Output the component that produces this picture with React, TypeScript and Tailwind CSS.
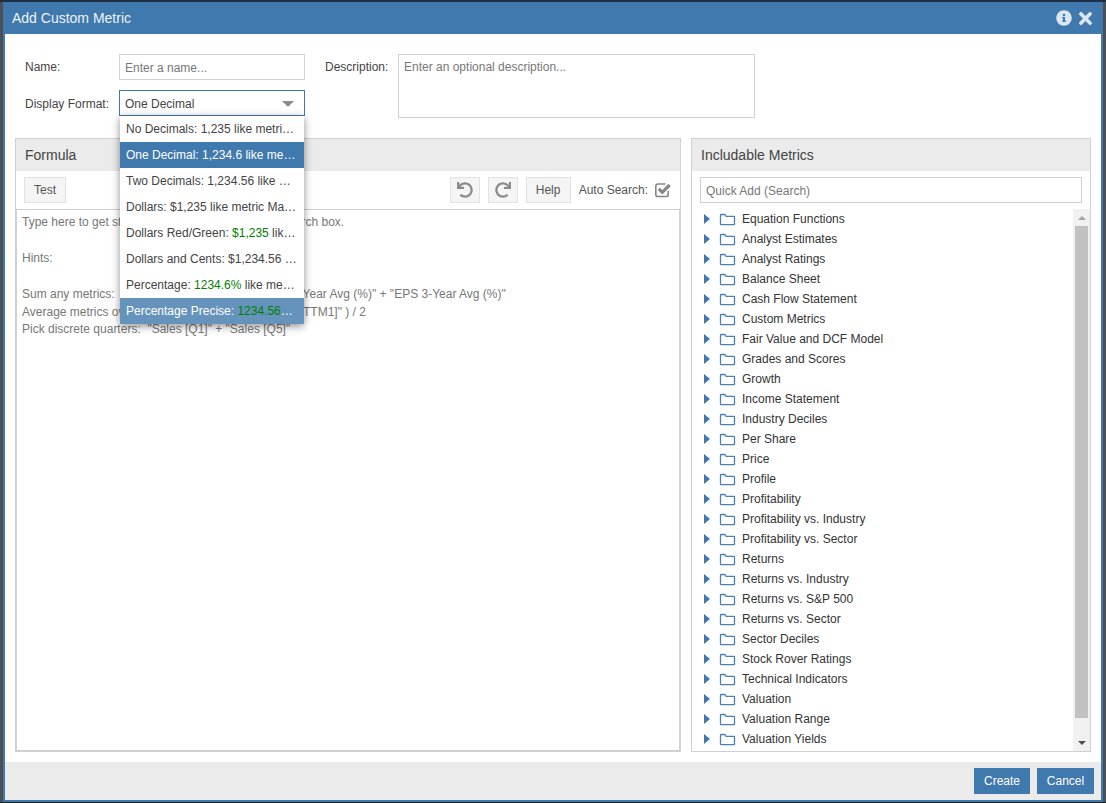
import React from "react";
import { FaInfoCircle, FaTimes, FaUndo, FaRedo } from "react-icons/fa";

const metrics = ["Equation Functions","Analyst Estimates","Analyst Ratings","Balance Sheet","Cash Flow Statement","Custom Metrics","Fair Value and DCF Model","Grades and Scores","Growth","Income Statement","Industry Deciles","Per Share","Price","Profile","Profitability","Profitability vs. Industry","Profitability vs. Sector","Returns","Returns vs. Industry","Returns vs. S&P 500","Returns vs. Sector","Sector Deciles","Stock Rover Ratings","Technical Indicators","Valuation","Valuation Range","Valuation Yields"];

const Green = ({ children }: { children: React.ReactNode }) => <span className="text-[#008000]">{children}</span>;

const options: { key: string; node: React.ReactNode; cls: string }[] = [
  { key: "a", node: <>No Decimals: 1,235 like metric Market Cap</>, cls: "text-[#444]" },
  { key: "b", node: <>One Decimal: 1,234.6 like metric P/E Ratio</>, cls: "bg-[#3f79ad] text-white" },
  { key: "c", node: <>Two Decimals: 1,234.56 like metric Price</>, cls: "text-[#444]" },
  { key: "d", node: <>Dollars: $1,235 like metric Market Cap</>, cls: "text-[#444]" },
  { key: "e", node: <>Dollars Red/Green: <Green>$1,235</Green> like metric Net Income</>, cls: "text-[#444]" },
  { key: "f", node: <>Dollars and Cents: $1,234.56 like metric Price</>, cls: "text-[#444]" },
  { key: "g", node: <>Percentage: <Green>1234.6%</Green> like metric Growth</>, cls: "text-[#444]" },
  { key: "h", node: <>Percentage Precise: <Green>1234.56%</Green> like metric Yield</>, cls: "bg-[#6693bb] text-white" },
];

function Folder() {
  return (
    <svg width="17" height="13" viewBox="0 0 17 13" fill="none" className="shrink-0">
      <path d="M1.5 11V2.2c0-.4.3-.7.7-.7h3.6l1.4 1.8h7.6c.4 0 .7.3.7.7V11c0 .4-.3.7-.7.7H2.2c-.4 0-.7-.3-.7-.7Z" stroke="#4a80b2" strokeWidth="1.3" />
    </svg>
  );
}

function CheckBox() {
  return (
    <svg width="16" height="16" viewBox="0 0 16 16" fill="none" className="ml-[7px]">
      <path d="M13.200 9v3.400c0 1.200-.9 2.100-2.100 2.100H2.900c-1.200 0-2.100-.9-2.100-2.100V4.100C.8 2.900 1.700 2 2.900 2h7.600" stroke="#858585" strokeWidth="1.600" />
      <path d="M3.800 6.800 7.300 10.300 14.600 3" stroke="#858585" strokeWidth="3.200" />
    </svg>
  );
}

function ToolButton({ children, className }: { children: React.ReactNode; className: string }) {
  return (
    <div className={"flex h-[26px] items-center justify-center border border-[#e2e2e2] bg-[#f5f5f5] " + className}>{children}</div>
  );
}

export default function App() {
  return (
    <div className="flex h-[803px] w-[1106px] flex-col overflow-hidden bg-[#4b5056] text-[12px] [font-family:'Liberation_Sans',Arial,sans-serif]">
      <div className="h-[2px] shrink-0 bg-[#1f3044]" />
      <div className="ml-[3px] flex h-[800px] w-[1100px] shrink-0 flex-col border-x-2 border-b-2 border-[#3f79ad] bg-white">
        <div className="flex h-[32px] shrink-0 items-center justify-between bg-[#3f79ad] pl-[7px] pr-[6px]">
          <span className="text-[14px] text-[#eef4f9]">Add Custom Metric</span>
          <div className="flex items-center gap-[4px] text-[#dce7f1]">
            <FaInfoCircle size={16} />
            <FaTimes size={19} />
          </div>
        </div>

        <div className="flex shrink-0 pl-[20px] pt-[20px] text-[#444]">
          <div className="flex w-[280px] flex-col gap-[10px]">
            <div className="flex items-start">
              <label className="w-[94px] pt-[4px]">Name:</label>
              <div className="flex h-[26px] w-[186px] items-center border border-[#d0d0d0] px-[5px] pt-[1px] text-[#777]">Enter a name...</div>
            </div>
            <div className="relative flex items-start">
              <label className="w-[94px] pt-[5px]">Display Format:</label>
              <div className="flex h-[26px] w-[186px] items-center justify-between border border-[#3f79ad] pl-[5px] pr-[10px] pt-[1px] text-[#444]">
                <span>One Decimal</span>
                <span className="h-0 w-0 border-x-[6px] border-t-[6px] border-x-transparent border-t-[#8c8c8c]" />
              </div>
              <div className="absolute left-[95px] top-[26px] z-10 w-[184px] bg-white shadow-[0_2px_8px_rgba(0,0,0,0.45)]">
                {options.map((o) => (
                  <div key={o.key} className={"h-[26px] truncate px-[6px] leading-[26px] " + o.cls}>{o.node}</div>
                ))}
              </div>
            </div>
          </div>
          <label className="ml-[20px] w-[73px] pt-[4px]">Description:</label>
          <div className="h-[64px] w-[357px] border border-[#d0d0d0] px-[5px] pt-[3px] text-[#777]">Enter an optional description...</div>
        </div>

        <div className="flex min-h-0 flex-1 gap-[10px] pl-[10px] pr-[10px] pt-[20px]">
          <div className="flex min-w-0 flex-1 flex-col border border-[#d0d0d0]">
            <div className="flex h-[32px] shrink-0 items-center bg-[#ebebeb] pl-[9px] text-[14px] text-[#444]">Formula</div>
            <div className="flex h-[38px] shrink-0 items-start justify-between pl-[8px] pr-[9px] pt-[6px]">
              <ToolButton className="w-[42px] text-[#555]">Test</ToolButton>
              <div className="flex items-center">
                <ToolButton className="w-[30px] text-[#8a8a8a]"><FaUndo size={16} /></ToolButton>
                <ToolButton className="ml-[8px] w-[30px] text-[#8a8a8a]"><FaRedo size={16} /></ToolButton>
                <ToolButton className="ml-[8px] w-[45px] text-[#555]">Help</ToolButton>
                <span className="ml-[8px] text-[#555]">Auto Search:</span>
                <CheckBox />
              </div>
            </div>
            <div className="min-h-0 flex-1 whitespace-pre border border-[#d0d0d0] px-[5px] pt-[4px] leading-[17.9px] text-[#777]">
              <div>Type here to get started, or add metrics from the search box.</div>
              <div>&nbsp;</div>
              <div>Hints:</div>
              <div>&nbsp;</div>
              <div>{'Sum any metrics:  "EPS 3-Year Avg (%)" + "Equity 3-Year Avg (%)" + "EPS 3-Year Avg (%)"'}</div>
              <div>{'Average metrics over time: ( "Sales [TTM]" + "Sales [TTM1]" ) / 2'}</div>
              <div>{'Pick discrete quarters:  "Sales [Q1]" + "Sales [Q5]"'}</div>
            </div>
          </div>

          <div className="flex w-[400px] shrink-0 flex-col border border-[#d0d0d0]">
            <div className="flex h-[32px] shrink-0 items-center bg-[#ebebeb] pl-[9px] text-[14px] text-[#444]">Includable Metrics</div>
            <div className="h-[38px] shrink-0 pl-[8px] pt-[6px]">
              <div className="flex h-[26px] w-[382px] items-center border border-[#d0d0d0] px-[5px] pt-[1px] text-[#777]">Quick Add (Search)</div>
            </div>
            <div className="flex min-h-0 flex-1">
              <div className="min-w-0 flex-1 pl-[12px]">
                {metrics.map((m) => (
                  <div key={m} className="flex h-[20px] items-center text-[#333]">
                    <span className="h-0 w-0 border-y-[5px] border-l-[6px] border-y-transparent border-l-[#3f79ad]" />
                    <span className="ml-[9px]"><Folder /></span>
                    <span className="ml-[6px]">{m}</span>
                  </div>
                ))}
              </div>
              <div className="flex w-[17px] shrink-0 flex-col items-center bg-[#f1f1f1]">
                <div className="flex h-[17px] shrink-0 items-center justify-center">
                  <span className="h-0 w-0 border-x-[4px] border-b-[4px] border-x-transparent border-b-[#a3a3a3]" />
                </div>
                <div className="h-[492px] w-[13px] shrink-0 bg-[#c1c1c1]" />
                <div className="flex-1" />
                <div className="flex h-[17px] shrink-0 items-center justify-center">
                  <span className="h-0 w-0 border-x-[4px] border-t-[4px] border-x-transparent border-t-[#505050]" />
                </div>
              </div>
            </div>
          </div>
        </div>

        <div className="mt-[10px] flex h-[38px] shrink-0 items-start justify-end gap-[7px] bg-[#ebebeb] pr-[7px] pt-[6px]">
          <div className="flex h-[26px] w-[56px] items-center justify-center bg-[#3f79ad] text-white">Create</div>
          <div className="flex h-[26px] w-[57px] items-center justify-center bg-[#3f79ad] text-white">Cancel</div>
        </div>
      </div>
      <div className="flex-1 bg-[#222]" />
    </div>
  );
}
